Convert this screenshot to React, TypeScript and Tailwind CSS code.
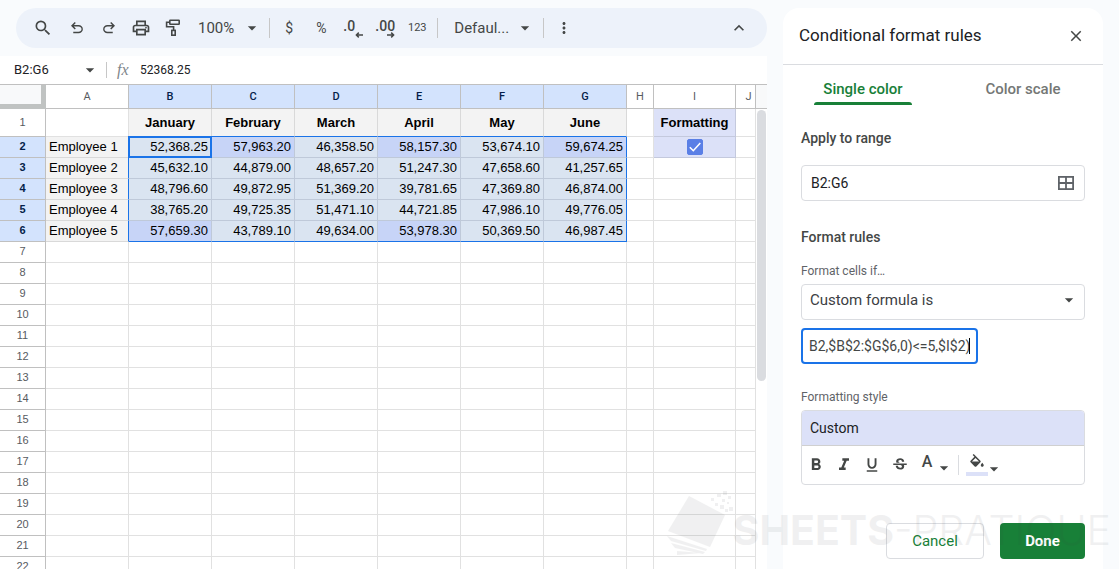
import { useState } from 'react';
import type { ReactNode } from 'react';
import {
    MdArrowDropDown,
    MdClose,
    MdExpandLess,
    MdFormatBold,
    MdFormatItalic,
    MdFormatUnderlined,
    MdMoreVert,
    MdSearch,
    MdStrikethroughS,
} from 'react-icons/md';

const COLUMNS = ['A', 'B', 'C', 'D', 'E', 'F', 'G', 'H', 'I', 'J'];
const MONTHS = ['January', 'February', 'March', 'April', 'May', 'June'];

const EMPLOYEES = [
    { name: 'Employee 1', values: ['52,368.25', '57,963.20', '46,358.50', '58,157.30', '53,674.10', '59,674.25'] },
    { name: 'Employee 2', values: ['45,632.10', '44,879.00', '48,657.20', '51,247.30', '47,658.60', '41,257.65'] },
    { name: 'Employee 3', values: ['48,796.60', '49,872.95', '51,369.20', '39,781.65', '47,369.80', '46,874.00'] },
    { name: 'Employee 4', values: ['38,765.20', '49,725.35', '51,471.10', '44,721.85', '47,986.10', '49,776.05'] },
    { name: 'Employee 5', values: ['57,659.30', '43,789.10', '49,634.00', '53,978.30', '50,369.50', '46,987.45'] },
];

const TOP_VALUES = ['57,963.20', '58,157.30', '59,674.25', '57,659.30', '53,978.30'];
const ROW_COUNT = 22;

function SymbolIcon({ d, className }: { d: string; className: string }) {
    return (
        <svg viewBox="0 -960 960 960" fill="currentColor" className={className} aria-hidden="true">
            <path d={d} />
        </svg>
    );
}

const UNDO =
    'M280-200v-80h284q63 0 109.5-40T720-420q0-60-46.5-100T564-560H312l104 104-56 56-200-200 200-200 56 56-104 104h252q97 0 163 63t66 157q0 94-66 157t-163 63H280Z';
const REDO =
    'M396-200q-97 0-163-63t-66-157q0-94 66-157t163-63h252L544-744l56-56 200 200-200 200-56-56 104-104H396q-63 0-109.5 40T240-420q0 60 46.5 100T396-280h284v80H396Z';
const PRINT =
    'M640-640v-120H320v120h-80v-200h480v200h-80Zm-480 80h640-640Zm560 100q17 0 28.5-11.5T760-500q0-17-11.5-28.5T720-540q-17 0-28.5 11.5T680-500q0 17 11.5 28.5T720-460Zm-80 260v-160H320v160h320Zm80 80H240v-160H80v-240q0-51 35-85.5t85-34.5h560q51 0 85.5 34.5T880-520v240H720v160Zm80-240v-160q0-17-11.5-28.5T760-560H200q-17 0-28.5 11.5T160-520v160h80v-80h480v80h80Z';

function PaintIcon() {
    return (
        <svg viewBox="0 0 16 18" className="h-[18px] w-4" fill="none" stroke="currentColor" strokeWidth="1.6" aria-hidden="true">
            <rect x="4.8" y="1.3" width="9.4" height="4" rx="0.5" />
            <path d="M4.8 3.2H1.6v4.6h7v3.4" />
            <rect x="6.8" y="11.4" width="3.4" height="4.8" />
        </svg>
    );
}

function BucketIcon() {
    return (
        <svg viewBox="0 0 24 24" className="size-[18px]" fill="currentColor" aria-hidden="true">
            <path d="M16.56 8.94 7.62 0 6.21 1.41l2.38 2.38-5.15 5.15a1.49 1.49 0 0 0 0 2.12l5.5 5.5c.29.29.68.44 1.06.44s.77-.15 1.06-.44l5.5-5.5c.59-.58.59-1.53 0-2.12zM5.21 10 10 5.21 14.79 10H5.21zM19 11.5s-2 2.17-2 3.5c0 1.1.9 2 2 2s2-.9 2-2c0-1.33-2-3.5-2-3.5z" />
        </svg>
    );
}

function DecimalIcon({ text, direction }: { text: string; direction: 'left' | 'right' }) {
    return (
        <span className="relative block h-5 w-5 text-left text-sm leading-4 font-medium">
            {text}
            <svg viewBox="0 0 8 6" className="absolute right-0 bottom-0 h-[6px] w-2" fill="none" stroke="currentColor" strokeWidth="1.5" aria-hidden="true">
                {direction === 'left' ? <path d="M8 3H1.4M3.8 .6 1.4 3l2.4 2.4" /> : <path d="M0 3h6.6M4.2 .6 6.6 3 4.2 5.4" />}
            </svg>
        </span>
    );
}

function ToolButton({ label, className, children }: { label: string; className: string; children: ReactNode }) {
    return (
        <button type="button" aria-label={label} className={`flex h-7 shrink-0 items-center justify-center ${className}`}>
            {children}
        </button>
    );
}

function Toolbar() {
    return (
        <div className="my-2 ml-4 flex h-10 items-center rounded-full bg-[#edf2fa] pr-4 pl-[11px] text-[#444746]">
            <ToolButton label="Search" className="w-8"><MdSearch className="size-5" /></ToolButton>
            <ToolButton label="Undo" className="w-9"><SymbolIcon d={UNDO} className="size-[18px]" /></ToolButton>
            <ToolButton label="Redo" className="w-7"><SymbolIcon d={REDO} className="size-[18px]" /></ToolButton>
            <ToolButton label="Print" className="w-9"><SymbolIcon d={PRINT} className="size-5" /></ToolButton>
            <ToolButton label="Paint format" className="w-7"><PaintIcon /></ToolButton>
            <ToolButton label="Zoom" className="ml-2 gap-2 pl-[3px] text-[15px]">
                100%
                <MdArrowDropDown className="size-5" />
            </ToolButton>
            <div className="ml-[7px] h-5 w-px bg-[#c7c7c7]" />
            <ToolButton label="Format as currency" className="ml-[3px] w-8 text-sm">$</ToolButton>
            <ToolButton label="Format as percent" className="w-8 text-sm">%</ToolButton>
            <ToolButton label="Decrease decimal places" className="w-8"><DecimalIcon text=".0" direction="left" /></ToolButton>
            <ToolButton label="Increase decimal places" className="w-8"><DecimalIcon text=".00" direction="right" /></ToolButton>
            <ToolButton label="More formats" className="w-8 text-[11px]">123</ToolButton>
            <div className="ml-1 h-5 w-px bg-[#c7c7c7]" />
            <ToolButton label="Font" className="gap-1.5 pl-4 text-[15px]">
                Defaul...
                <MdArrowDropDown className="size-5" />
            </ToolButton>
            <div className="ml-2 h-5 w-px bg-[#c7c7c7]" />
            <ToolButton label="More" className="ml-1 w-8"><MdMoreVert className="size-[18px]" /></ToolButton>
            <ToolButton label="Hide the menus" className="ml-auto w-6"><MdExpandLess className="size-5" /></ToolButton>
        </div>
    );
}

function FormulaBar() {
    return (
        <div className="flex h-7 items-center bg-white text-[#202124]">
            <input aria-label="Name box" defaultValue="B2:G6" className="ml-3.5 w-16 text-[13px] outline-none" />
            <MdArrowDropDown className="ml-0.5 size-5 text-[#444746]" />
            <div className="ml-1.5 h-4 w-px bg-[#c7c7c7]" />
            <span className="ml-2.5 w-[23px] font-['Liberation_Serif',serif] text-base text-[#80868b] italic">fx</span>
            <input aria-label="Formula" defaultValue="52368.25" className="min-w-0 flex-1 text-xs outline-none" />
        </div>
    );
}

function columnHeadClass(index: number) {
    const selected = index >= 1 && index <= 6;
    return selected ? 'bg-[#d3e3fd] text-[#041e49] font-medium' : 'bg-white text-[#575b5f] font-normal';
}

function ValueCell({ value, row, col }: { value: string; row: number; col: number }) {
    const background = TOP_VALUES.includes(value) ? 'bg-[#c7d4f7]' : 'bg-[#dae4f1]';
    const right = col === 5 ? 'border-r-[#1a73e8]' : 'border-r-[#bfc9d9]';
    const bottom = row === 6 ? 'border-b-[#1a73e8]' : 'border-b-[#bfc9d9]';
    const active = row === 2 && col === 0;
    return (
        <td className={`relative border-r border-b pr-[3px] text-right ${background} ${right} ${bottom}`}>
            {value}
            {active && <span className="absolute -inset-px border-2 border-[#1a73e8]" />}
        </td>
    );
}

function GridRow({ row, checked, onToggle }: { row: number; checked: boolean; onToggle: () => void }) {
    const employee = row >= 2 && row <= 6 ? EMPLOYEES[row - 2] : null;
    const blank = 'border-r border-b border-[#e1e1e1]';

    return (
        <tr className={row === 1 ? 'h-7' : 'h-[21px]'}>
            <th
                scope="row"
                className={`border-r border-b border-[#c0c0c0] pb-0.5 text-[11px] ${employee ? 'bg-[#d3e3fd] font-bold text-[#041e49]' : 'font-normal text-[#575b5f]'}`}
            >
                {row}
            </th>
            {employee ? (
                <td className="border-r border-b border-r-[#1a73e8] border-b-[#d9d9d9] bg-[#f3f3f3] pl-[3px]">{employee.name}</td>
            ) : (
                <td className={blank} />
            )}
            {MONTHS.map((month, col) => {
                if (row === 1) {
                    return (
                        <td key={month} className="border-r border-b border-r-[#d9d9d9] border-b-[#1a73e8] bg-[#f3f3f3] text-center font-bold">
                            {month}
                        </td>
                    );
                }
                if (employee) {
                    return <ValueCell key={month} value={employee.values[col]} row={row} col={col} />;
                }
                return <td key={month} className={blank} />;
            })}
            <td className={blank} />
            {row === 1 && <td className="border-r border-b border-[#c4c9dd] bg-[#dce1f8] text-center font-bold">Formatting</td>}
            {row === 2 && (
                <td className="border-r border-b border-[#c4c9dd] bg-[#dce1f8]">
                    <span className="relative mx-auto block size-4">
                        <input
                            type="checkbox"
                            aria-label="Formatting"
                            checked={checked}
                            onChange={onToggle}
                            className="block size-4 appearance-none rounded-xs border border-[#5a7fe6] checked:bg-[#5a7fe6]"
                        />
                        {checked && (
                            <svg viewBox="0 0 16 16" className="pointer-events-none absolute inset-0" fill="none" stroke="#fff" strokeWidth="1.6" aria-hidden="true">
                                <path d="M2.8 8.2 6.3 11.7 13.3 4" />
                            </svg>
                        )}
                    </span>
                </td>
            )}
            {row > 2 && <td className={blank} />}
            <td className={blank} />
        </tr>
    );
}

function Sheet() {
    const [checked, setChecked] = useState(true);

    return (
        <div className="flex min-h-0 flex-1 border-t border-[#c0c0c0] bg-white">
            <div className="min-w-0 flex-1 overflow-hidden">
                <table className="w-full table-fixed border-separate border-spacing-0 font-['Liberation_Sans',Arial,sans-serif] text-[13px] leading-4 text-black">
                    <colgroup>
                        <col className="w-[46px]" />
                        {COLUMNS.slice(0, 7).map((name) => (
                            <col key={name} className="w-[83px]" />
                        ))}
                        <col className="w-[27px]" />
                        <col className="w-[82px]" />
                        <col />
                    </colgroup>
                    <thead>
                        <tr className="h-6">
                            <th aria-label="Select all" className="border-r-[5px] border-b-[5px] border-[#c0c3c2] bg-[#f8f9fa]" />
                            {COLUMNS.map((name, index) => (
                                <th key={name} scope="col" className={`border-r border-b border-[#c0c0c0] font-[Roboto,sans-serif] text-[11px] ${index === 9 ? 'pl-1.5' : ''} ${columnHeadClass(index)}`}>
                                    {name}
                                </th>
                            ))}
                        </tr>
                    </thead>
                    <tbody>
                        {Array.from({ length: ROW_COUNT }, (_, i) => (
                            <GridRow key={i} row={i + 1} checked={checked} onToggle={() => setChecked(!checked)} />
                        ))}
                    </tbody>
                </table>
            </div>
            {/* Scrollbar */}
            <div className="w-[11px] shrink-0">
                <div className="h-6 border-b border-[#c0c0c0] bg-[#f8f9fa]" />
                <div className="mx-px mt-px h-[56%] rounded-full bg-[#dadce0]" />
            </div>
        </div>
    );
}

function StyleBox() {
    return (
        <div className="overflow-hidden rounded-sm border border-[#dadce0]">
            <div className="flex h-[35px] items-center border-b border-[#d0d0d0] bg-[#dce1f8] px-2 text-sm text-[#202124]">Custom</div>
            <div className="flex h-[38px] items-center text-[#444746]">
                <ToolButton label="Bold" className="w-7"><MdFormatBold className="size-5" /></ToolButton>
                <ToolButton label="Italic" className="w-7"><MdFormatItalic className="size-5" /></ToolButton>
                <ToolButton label="Underline" className="w-7"><MdFormatUnderlined className="size-[18px]" /></ToolButton>
                <ToolButton label="Strikethrough" className="w-7"><MdStrikethroughS className="size-[18px]" /></ToolButton>
                <ToolButton label="Text color" className="ml-1.5 w-9 gap-0.5">
                    <span className="mb-1.5 text-base leading-4 font-medium">A</span>
                    <MdArrowDropDown className="mt-1.5 size-5" />
                </ToolButton>
                <div className="ml-0.5 h-5 w-px bg-[#dadce0]" />
                <ToolButton label="Fill color" className="ml-[7px]">
                    <span className="border-b-4 border-[#dce1f8] px-0.5">
                        <BucketIcon />
                    </span>
                    <MdArrowDropDown className="-ml-1 size-5 self-end" />
                </ToolButton>
            </div>
        </div>
    );
}

function RulesPanel() {
    return (
        <aside className="mt-2 flex w-80 shrink-0 flex-col rounded-t-2xl bg-white">
            <header className="flex h-[57px] items-center justify-between border-b border-[#dadce0] pr-[18px] pl-4">
                <h2 className="text-[17px] text-[#202124]">Conditional format rules</h2>
                <button type="button" aria-label="Close" className="text-[#444746]"><MdClose className="size-[18px]" /></button>
            </header>
            <div className="flex h-10 text-[15px] font-medium">
                <div className="flex flex-1 justify-center">
                    <button type="button" className="flex flex-col items-center text-[#188038]">
                        <span className="flex h-[37px] items-center pt-3">Single color</span>
                        <span className="h-[3px] w-[98px] rounded-t-sm bg-[#188038]" />
                    </button>
                </div>
                <button type="button" className="h-[37px] flex-1 pt-3 text-[#747775]">Color scale</button>
            </div>
            <div className="flex flex-1 flex-col px-[18px] text-[#444746]">
                <label htmlFor="range" className="mt-[23px] text-sm leading-5 font-medium">Apply to range</label>
                <div className="mt-[17px] flex h-9 items-center rounded-sm border border-[#dadce0] pr-2.5 pl-[9px]">
                    <input id="range" defaultValue="B2:G6" className="min-w-0 flex-1 text-sm text-[#202124] outline-none" />
                    <svg viewBox="0 0 16 14" className="h-3.5 w-4" fill="none" stroke="#5f6368" strokeWidth="1.8" aria-hidden="true">
                        <rect x=".9" y=".9" width="14.2" height="12.2" />
                        <path d="M8 1v12M1 7h14" />
                    </svg>
                </div>
                <h3 className="mt-[26px] text-sm leading-5 font-medium">Format rules</h3>
                <label htmlFor="condition" className="mt-4 text-xs leading-4 text-[#5f6368]">Format cells if…</label>
                <div className="relative mt-[5px] h-9">
                    <select id="condition" className="size-full appearance-none rounded-sm border border-[#dadce0] pr-8 pb-1 pl-2 text-[15px] text-[#3c4043]">
                        <option>Custom formula is</option>
                    </select>
                    <MdArrowDropDown className="pointer-events-none absolute top-1.5 right-1.5 size-5" />
                </div>
                <div className="mt-2 flex h-9 w-[177px] items-center rounded-sm border-2 border-[#1a73e8] px-1.5">
                    <input aria-label="Formula value" defaultValue="B2,$B$2:$G$6,0)<=5,$I$2)" className="min-w-0 flex-1 text-right text-sm outline-none" />
                    <span className="h-4 w-px bg-black" />
                </div>
                <h4 className="mt-[25px] mb-[5px] text-xs leading-4 text-[#5f6368]">Formatting style</h4>
                <StyleBox />
                <div className="mt-[38px] flex justify-end gap-4">
                    <button type="button" className="h-9 w-[98px] rounded-sm border border-[#dadce0] text-[15px] text-[#188038]">Cancel</button>
                    <button type="button" className="h-9 w-[85px] rounded-sm bg-[#188038] text-[15px] font-bold text-white">Done</button>
                </div>
            </div>
        </aside>
    );
}

function Watermark() {
    return (
        <div className="pointer-events-none absolute right-2 bottom-3 flex items-end text-[#3c4043] opacity-7">
            <svg viewBox="0 0 66 66" className="h-[66px] w-[66px]" fill="currentColor" aria-hidden="true">
                <path d="M22 5 58 24 43 56 1 40Z" />
                <path d="M0 45 40 58 39 60 4 50ZM4 52 38 61 36 63 8 57ZM10 60 34 62 10 64Z" />
                <path d="M44 7h3v3h-3zM50 3h4v3h-4zM56 0h4v4h-4zM48 12h3v3h-3zM55 8h3v3h-3zM61 5h3v3h-3zM53 14h4v4h-4zM60 11h2v2h-2zM58 18h3v3h-3zM62 16h4v4h-4z" />
            </svg>
            <span className="font-[Inter,sans-serif] text-[41px] leading-[54px]">
                <b className="font-bold">SHEETS</b>
                <span className="font-light">-PRATIQUE</span>
            </span>
        </div>
    );
}

export default function App() {
    return (
        <div className="relative flex h-screen overflow-hidden bg-[#f9fbfd] pr-4 font-[Roboto,sans-serif]">
            <main className="mr-4 flex min-w-0 flex-1 flex-col">
                <Toolbar />
                <FormulaBar />
                <Sheet />
            </main>
            <RulesPanel />
            <Watermark />
        </div>
    );
}
